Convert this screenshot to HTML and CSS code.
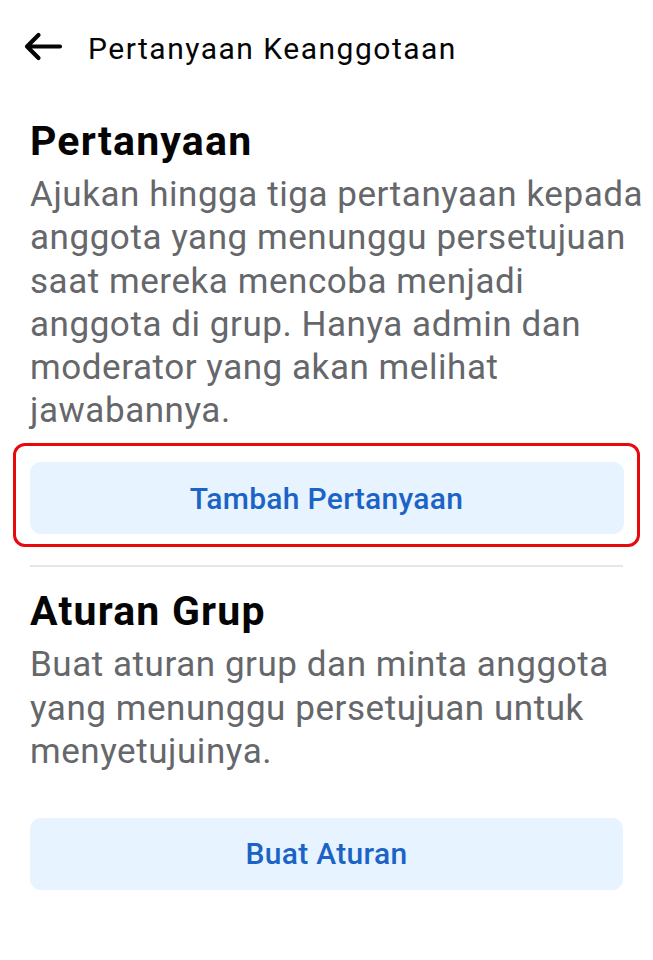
FILE: index.html
```html
<!DOCTYPE html>
<html lang="id">
<head>
<meta charset="utf-8">
<title>Pertanyaan Keanggotaan</title>
<link rel="stylesheet" href="styles.css">
</head>
<body>
<header class="topbar">
  <button class="back" aria-label="Kembali">
    <svg width="40" height="36" viewBox="0 0 40 36" aria-hidden="true">
      <path d="M37 15.5H4M15.5 4L4 15.5L15.5 27" fill="none" stroke="#050505" stroke-width="4.2" stroke-linecap="round" stroke-linejoin="round"/>
    </svg>
  </button>
  <h1 class="topbar-title">Pertanyaan Keanggotaan</h1>
</header>

<main class="content">
  <section class="block">
    <h2 class="block-title">Pertanyaan</h2>
    <p class="block-text">Ajukan hingga tiga pertanyaan kepada anggota yang menunggu persetujuan saat mereka mencoba menjadi anggota di grup. Hanya admin dan moderator yang akan melihat jawabannya.</p>
    <div class="focus-ring">
      <button class="action">Tambah Pertanyaan</button>
    </div>
  </section>

  <hr class="divider">

  <section class="block">
    <h2 class="block-title">Aturan Grup</h2>
    <p class="block-text">Buat aturan grup dan minta anggota yang menunggu persetujuan untuk menyetujuinya.</p>
    <button class="action action-spaced">Buat Aturan</button>
  </section>
</main>
</body>
</html>
```

FILE: styles.css
```css
* { box-sizing: border-box; }

html, body {
  margin: 0;
  padding: 0;
  background: #ffffff;
  font-family: Roboto, "Noto Sans", "Liberation Sans", sans-serif;
  color: #050505;
}

/* top app bar: back arrow + screen title */
.topbar {
  display: flex;
  align-items: flex-start;
  gap: 25px;
  padding: 31px 0 0 23px;
}

.back {
  display: flex;
  border: 0;
  background: none;
  padding: 0;
  margin: 0;
}

.topbar-title {
  margin: 0;
  font-size: 30px;
  line-height: 36px;
  font-weight: 400;
  letter-spacing: 1.5px;
  color: #050505;
}

.content {
  padding: 51px 30px 0 30px;
}

.block-title {
  margin: 0 0 9px 0;
  font-size: 41px;
  line-height: 46px;
  font-weight: 700;
  letter-spacing: 1.2px;
}

.block-text {
  margin: 0 -30px 0 0;
  font-size: 35px;
  line-height: 43.3px;
  letter-spacing: 0.55px;
  color: #65676b;
}

/* highlighted outline around the first action */
.focus-ring {
  margin: 10.5px -17px 0 -17px;
  padding: 16px 13.5px 9.5px 13.5px;
  border: 3.5px solid #e8090f;
  border-radius: 12px;
}

.action {
  display: block;
  width: 100%;
  height: 72px;
  border: 0;
  border-radius: 11px;
  background: #e7f3ff;
  color: #1b64c6;
  font-family: inherit;
  font-size: 30px;
  font-weight: 500;
  letter-spacing: 0.3px;
}

.action-spaced {
  margin-top: 44.5px;
}

.divider {
  border: 0;
  height: 2px;
  background: #e4e6eb;
  margin: 18.5px 0 21px 0;
}
```
